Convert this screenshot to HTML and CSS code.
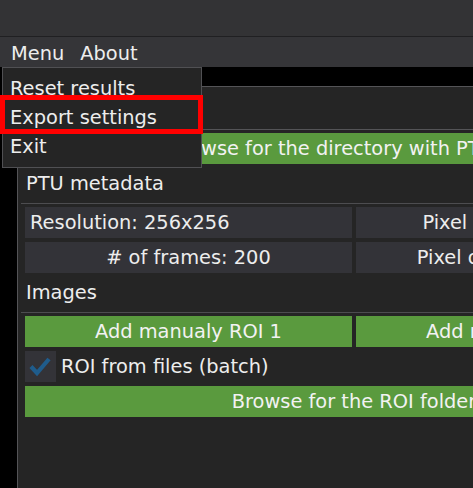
FILE: index.html
```html
<!DOCTYPE html>
<html>
<head>
<meta charset="utf-8">
<link rel="stylesheet" href="styles.css">
</head>
<body>
<div class="titlebar"></div>
<div class="menubar">
  <span class="menu-item">Menu</span>
  <span class="menu-item">About</span>
</div>
<div class="stage">
  <div class="window">
    <div class="window-title"></div>
    <div class="window-body">
      <div class="btn green">Browse for the directory with PTU files</div>
      <div class="heading">PTU metadata</div>
      <div class="sep"></div>
      <div class="grid2">
        <div class="cell left">Resolution: 256x256</div>
        <div class="cell">Pixel size: 0.080 µm</div>
        <div class="cell"># of frames: 200</div>
        <div class="cell">Pixel dwell time: 1 µs</div>
      </div>
      <div class="heading">Images</div>
      <div class="sep"></div>
      <div class="grid2">
        <div class="btn green">Add manualy ROI 1</div>
        <div class="btn green">Add manualy ROI 2</div>
      </div>
      <div class="check-row">
        <div class="check-box">
          <svg width="31" height="31" viewBox="0 0 31 31"><polyline points="6,15.5 12,22 24,8" fill="none" stroke="#1f5c8c" stroke-width="4.2" stroke-linecap="butt" stroke-linejoin="miter"/></svg>
        </div>
        <span class="check-label">ROI from files (batch)</span>
      </div>
      <div class="btn green">Browse for the ROI folder</div>
    </div>
  </div>
</div>
<div class="popup">
  <div class="popup-item">Reset results</div>
  <div class="popup-item">Export settings</div>
  <div class="popup-item">Exit</div>
</div>
<div class="highlight"></div>
</body>
</html>
```
FILE: styles.css
```css
html, body {
  margin: 0;
  padding: 0;
}
body {
  width: 473px;
  height: 488px;
  overflow: hidden;
  background: #000;
  font-family: "DejaVu Sans", Verdana, sans-serif;
  font-size: 19.4px;
  color: #ededed;
  position: relative;
}
.titlebar {
  height: 36px;
  background: #333335;
  border-bottom: 1px solid #202022;
}
.menubar {
  height: 28px;
  padding-top: 2px;
  background: #353538;
  display: flex;
  gap: 16px;
  padding-left: 11px;
  line-height: 30px;
}
.stage {
  padding: 19px 0 0 17px;
}
.window {
  width: 720px;
  height: 420px;
  background: #252525;
  border-top: 1px solid #545457;
  border-left: 1px solid #545457;
}
.window-title {
  height: 42px;
  border-bottom: 1px solid #545457;
}
.window-body {
  padding: 3px 0 0 7px;
  width: 658px;
  display: flex;
  flex-direction: column;
  gap: 4px;
}
.btn {
  height: 31px;
  line-height: 31px;
  text-align: center;
  white-space: nowrap;
}
.green {
  background: #5a9a3e;
  color: #f2f2f2;
}
.heading {
  height: 31px;
  line-height: 31px;
  padding-left: 1px;
}
.sep {
  height: 1px;
  background: #4d4d50;
  margin: 0 -20px -1px -4px;
}
.grid2 {
  display: grid;
  grid-template-columns: 327px 327px;
  gap: 4px;
}
.cell {
  height: 31px;
  line-height: 31px;
  background: #333338;
  text-align: center;
  white-space: nowrap;
}
.cell.left {
  text-align: left;
  padding-left: 5px;
}
.check-row {
  display: flex;
  align-items: center;
  height: 31px;
  gap: 5px;
}
.check-box {
  width: 31px;
  height: 31px;
  background: #333338;
}
.check-box svg {
  display: block;
}
.check-label {
  line-height: 31px;
}
.popup {
  position: absolute;
  left: 2px;
  top: 67px;
  width: 198px;
  height: 93px;
  padding-top: 6px;
  background: #252525;
  border: 1px solid #505053;
}
.popup-item {
  height: 29px;
  line-height: 29px;
  padding-left: 7px;
  white-space: nowrap;
}
.highlight {
  position: absolute;
  left: 0;
  top: 95px;
  width: 193px;
  height: 29px;
  border: 5px solid #ff0000;
}
```
